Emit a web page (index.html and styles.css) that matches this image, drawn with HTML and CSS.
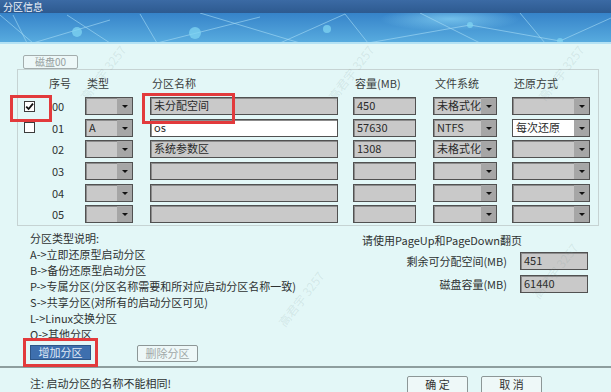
FILE: index.html
```html
<!DOCTYPE html>
<html>
  <head>
    <link rel="stylesheet" href="styles.css">
  </head>
  <body>
    <div class="titlebar">分区信息</div>
    <div class="banner">
      <svg width="611" height="31" viewBox="0 0 611 31">
        <defs>
          <linearGradient id="bg" x1="0" y1="0" x2="0" y2="1">
            <stop offset="0" stop-color="#3683c9"/>
            <stop offset="1" stop-color="#5aaee0"/>
          </linearGradient>
          <radialGradient id="glow" cx="0.5" cy="0.5" r="0.5">
            <stop offset="0" stop-color="#8ad6f6" stop-opacity=".7"/>
            <stop offset="1" stop-color="#8ad6f6" stop-opacity="0"/>
          </radialGradient>
        </defs>
        <rect width="611" height="31" fill="url(#bg)"/>
        <ellipse cx="450" cy="6" rx="70" ry="12" fill="url(#glow)"/>
        <g stroke="#a6dcf5" stroke-opacity=".6" stroke-width="1" fill="none">
          <line x1="0" y1="2" x2="33" y2="30"/>
          <line x1="13" y1="2" x2="27" y2="30"/>
          <line x1="33" y1="30" x2="110" y2="7"/>
          <line x1="67" y1="2" x2="110" y2="30"/>
          <line x1="140" y1="1" x2="157" y2="30"/>
          <line x1="157" y1="30" x2="260" y2="4"/>
          <line x1="200" y1="0" x2="300" y2="30"/>
          <line x1="280" y1="30" x2="345" y2="1"/>
          <line x1="345" y1="1" x2="368" y2="30"/>
          <line x1="368" y1="30" x2="470" y2="12"/>
          <line x1="420" y1="0" x2="480" y2="30"/>
          <line x1="470" y1="12" x2="560" y2="28"/>
          <line x1="520" y1="0" x2="545" y2="30"/>
          <line x1="560" y1="28" x2="611" y2="5"/>
        </g>
        <g fill="#7fd4f2" fill-opacity=".75">
          <circle cx="77" cy="19" r="5"/>
          <circle cx="195" cy="20" r="6"/>
          <circle cx="327" cy="16" r="4"/>
          <circle cx="470" cy="12" r="3"/>
          <circle cx="560" cy="28" r="3"/>
        </g>
        <rect y="29" width="611" height="2" fill="#b4e2f4"/>
      </svg>
    </div>

    <div class="tab">磁盘00</div>

    <div class="group">
      <div class="row head">
        <span></span>
        <span>序号</span>
        <span>类型</span>
        <span>分区名称</span>
        <span>容量(MB)</span>
        <span>文件系统</span>
        <span>还原方式</span>
      </div>

      <div class="row">
        <span class="cb mark-cb">
          <span class="check">
            <svg width="9" height="9" viewBox="0 0 9 9"><polyline points="1.2,4.6 3.6,7 8,1.6" fill="none" stroke="#111" stroke-width="1.8"/></svg>
          </span>
        </span>
        <span class="num">00</span>
        <span><span class="select w-type"><span class="val"></span><span class="arrow"></span></span></span>
        <span class="mark-name"><span class="field w-name">未分配空间</span></span>
        <span><span class="field w-cap">450</span></span>
        <span><span class="select w-fs"><span class="val">未格式化</span><span class="arrow"></span></span></span>
        <span><span class="select w-rest"><span class="val"></span><span class="arrow"></span></span></span>
      </div>

      <div class="row">
        <span class="cb"><span class="check"></span></span>
        <span class="num">01</span>
        <span><span class="select w-type"><span class="val">A</span><span class="arrow"></span></span></span>
        <span><span class="field w-name white">os</span></span>
        <span><span class="field w-cap">57630</span></span>
        <span><span class="select w-fs"><span class="val">NTFS</span><span class="arrow"></span></span></span>
        <span><span class="select w-rest"><span class="val white">每次还原</span><span class="arrow"></span></span></span>
      </div>

      <div class="row">
        <span class="cb"></span>
        <span class="num">02</span>
        <span><span class="select w-type"><span class="val"></span><span class="arrow"></span></span></span>
        <span><span class="field w-name">系统参数区</span></span>
        <span><span class="field w-cap">1308</span></span>
        <span><span class="select w-fs"><span class="val">未格式化</span><span class="arrow"></span></span></span>
        <span><span class="select w-rest"><span class="val"></span><span class="arrow"></span></span></span>
      </div>

      <div class="row">
        <span class="cb"></span>
        <span class="num">03</span>
        <span><span class="select w-type"><span class="val"></span><span class="arrow"></span></span></span>
        <span><span class="field w-name"></span></span>
        <span><span class="field w-cap"></span></span>
        <span><span class="select w-fs"><span class="val"></span><span class="arrow"></span></span></span>
        <span><span class="select w-rest"><span class="val"></span><span class="arrow"></span></span></span>
      </div>

      <div class="row">
        <span class="cb"></span>
        <span class="num">04</span>
        <span><span class="select w-type"><span class="val"></span><span class="arrow"></span></span></span>
        <span><span class="field w-name"></span></span>
        <span><span class="field w-cap"></span></span>
        <span><span class="select w-fs"><span class="val"></span><span class="arrow"></span></span></span>
        <span><span class="select w-rest"><span class="val"></span><span class="arrow"></span></span></span>
      </div>

      <div class="row">
        <span class="cb"></span>
        <span class="num">05</span>
        <span><span class="select w-type"><span class="val"></span><span class="arrow"></span></span></span>
        <span><span class="field w-name"></span></span>
        <span><span class="field w-cap"></span></span>
        <span><span class="select w-fs"><span class="val"></span><span class="arrow"></span></span></span>
        <span><span class="select w-rest"><span class="val"></span><span class="arrow"></span></span></span>
      </div>
    </div>

    <div class="lower">
      <div class="legend">
        <p>分区类型说明:</p>
        <p>A-&gt;立即还原型启动分区</p>
        <p>B-&gt;备份还原型启动分区</p>
        <p>P-&gt;专属分区(分区名称需要和所对应启动分区名称一致)</p>
        <p>S-&gt;共享分区(对所有的启动分区可见)</p>
        <p>L-&gt;Linux交换分区</p>
        <p>O-&gt;其他分区</p>
        <div class="actions">
          <span class="btn primary">增加分区</span>
          <span class="btn disabled">删除分区</span>
        </div>
      </div>
      <div class="info">
        <p>请使用PageUp和PageDown翻页</p>
        <div class="info-row first">
          <span class="label">剩余可分配空间(MB)</span>
          <span class="field w-info">451</span>
        </div>
        <div class="info-row">
          <span class="label">磁盘容量(MB)</span>
          <span class="field w-info">61440</span>
        </div>
      </div>
    </div>

    <div class="footer">
      <span class="note">注: 启动分区的名称不能相同!</span>
      <div class="footer-btns">
        <span class="btn wide">确 定</span>
        <span class="btn wide">取 消</span>
      </div>
    </div>

    <span class="wm wm1">高君宇 3257</span>
    <span class="wm wm2">高君宇 3257</span>
    <span class="wm wm3">高君宇 3257</span>
    <span class="wm wm4">高君宇 3257</span>
    <span class="wm wm5">高君宇 3257</span>
  </body>
</html>
```

FILE: styles.css
```css
* {
  box-sizing: border-box;
}

body {
  position: relative;
  margin: 0;
  width: 611px;
  height: 392px;
  overflow: hidden;
  background-color: #e3f7f7;
  font-family: "Noto Sans CJK SC", "Noto Sans", sans-serif;
  font-size: 11px;
  color: #2e3232;
}

p {
  margin: 0;
}

.titlebar {
  height: 13px;
  background: linear-gradient(#3b6aa4, #2d5a90);
  color: #eef3fb;
  font-size: 10px;
  line-height: 13px;
  padding-left: 3px;
}

.banner svg {
  display: block;
}

.tab {
  margin: 11px 0 0 23px;
  width: 55px;
  height: 14px;
  border: 1px solid #a3adad;
  border-radius: 2px;
  background-color: #edf8f8;
  color: #96a0a0;
  font-size: 10px;
  line-height: 12px;
  text-align: center;
}

.group {
  margin-left: 17px;
  width: 582px;
  height: 157px;
  border: 1px solid #c6d3d3;
  padding-top: 6px;
}

.row {
  display: grid;
  grid-template-columns: 29px 38px 65px 203px 80px 79px 78px;
  height: 18px;
  margin-bottom: 3.7px;
  align-items: center;
}

.row.head {
  height: 14px;
  margin-bottom: 7px;
  line-height: 14px;
  color: #3a3e3e;
}

.row.head span {
  padding-left: 2px;
}

.num {
  padding-left: 5px;
}

.cb {
  position: relative;
  height: 18px;
  display: flex;
  align-items: center;
}

.check {
  display: block;
  margin-left: 6px;
  width: 11px;
  height: 11px;
  border: 1px solid #3c3c3c;
  background-color: #fff;
}

.check svg {
  display: block;
}

.mark-cb::after {
  content: "";
  position: absolute;
  left: -8px;
  top: -2px;
  width: 36px;
  height: 21px;
  border: 3px solid #e23a3c;
}

.mark-name {
  position: relative;
}

.mark-name::after {
  content: "";
  position: absolute;
  left: -8px;
  top: -4px;
  width: 87px;
  height: 25px;
  border: 3px solid #e23a3c;
}

.field,
.select {
  display: flex;
  height: 18px;
  border: 1px solid #515151;
  box-shadow: inset 1px 1px 0 #8c8c8c;
  background-color: #c9c9c9;
  line-height: 15px;
  color: #2a2a2a;
}

.field {
  padding-left: 3px;
}

.val {
  flex: 1;
  padding-left: 3px;
}

.white {
  background-color: #fff;
}

.arrow {
  position: relative;
  width: 15px;
  background-color: #a6a6a6;
}

.arrow::after {
  content: "";
  position: absolute;
  left: 5px;
  top: 7px;
  border-left: 3px solid transparent;
  border-right: 3px solid transparent;
  border-top: 3px solid #111;
}

.w-type {
  width: 48px;
}

.w-name {
  width: 188px;
}

.w-cap {
  width: 63px;
}

.w-fs {
  width: 64px;
}

.w-rest {
  width: 78px;
}

.w-info {
  width: 68px;
}

.lower {
  display: flex;
  height: 140px;
  padding-top: 4px;
}

.legend {
  width: 362px;
  padding-left: 30px;
}

.legend p {
  line-height: 16px;
}

.actions {
  display: flex;
  align-items: flex-start;
  margin-top: 3px;
}

.btn {
  display: block;
  height: 17px;
  border: 1px solid #8d9797;
  border-radius: 2px;
  background-color: #eef8f8;
  text-align: center;
  line-height: 15px;
  color: #333;
}

.btn.primary {
  width: 61px;
  height: 15px;
  line-height: 13px;
  border-color: #2d5587;
  border-radius: 0;
  background-color: #3e6fae;
  color: #dfe9f6;
  outline: 3px solid #e23a3c;
  outline-offset: 4px;
}

.btn.disabled {
  width: 61px;
  margin-left: 46px;
  color: #a0a8a8;
}

.info {
  width: 226px;
  padding-top: 2px;
}

.info p {
  line-height: 16px;
}

.info-row {
  display: flex;
  justify-content: flex-end;
  align-items: center;
  margin-top: 5px;
}

.info-row.first {
  margin-top: 4px;
}

.label {
  margin-right: 13px;
}

.footer {
  display: flex;
  height: 26px;
  border-top: 2px solid #8e9e9e;
  padding-left: 30px;
}

.note {
  margin-top: 7px;
  line-height: 16px;
}

.footer-btns {
  display: flex;
  gap: 13px;
  margin-left: auto;
  margin-right: 69px;
  margin-top: 8px;
}

.btn.wide {
  width: 61px;
  height: 18px;
}

/* faint watermark stamped across the screen */
.wm {
  position: absolute;
  font-size: 12px;
  color: rgba(120, 150, 150, 0.16);
  transform: rotate(-52deg);
  white-space: nowrap;
  pointer-events: none;
}

.wm1 {
  left: 70px;
  top: 64px;
}

.wm2 {
  left: 318px;
  top: 64px;
}

.wm3 {
  left: 528px;
  top: 64px;
}

.wm4 {
  left: 268px;
  top: 290px;
}

.wm5 {
  left: 522px;
  top: 262px;
}
```
